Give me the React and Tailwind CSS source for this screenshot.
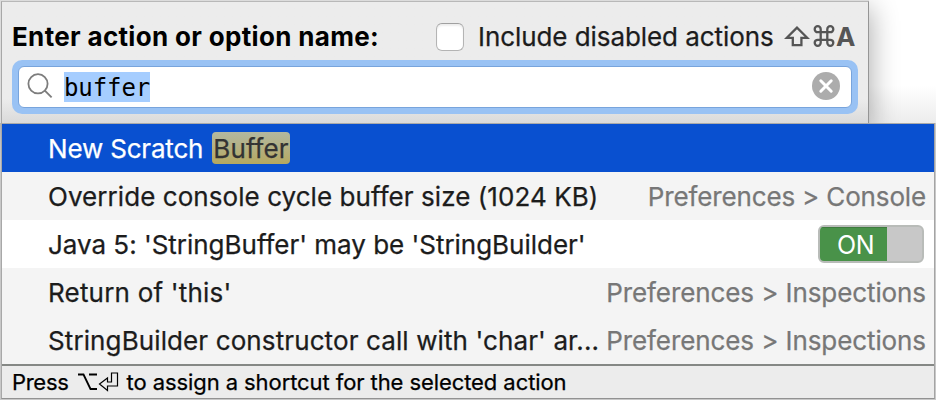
const ROW = "flex h-12 shrink-0 items-center justify-between pl-[46px] pr-[8px] text-[26px] leading-[46px] whitespace-nowrap pt-[2px] [-webkit-text-stroke:0.25px]";

function Toggle() {
  return (
    <div className="mt-[-2px] mr-[2px] flex h-[38px] w-[106px] overflow-hidden rounded-[6px] border-2 border-[#b9bcb9] bg-[#c8c8c8]">
      <div className="flex w-[67px] items-center justify-center pl-[4px] pt-[2px] bg-[#499249] text-[25px] leading-none tracking-[-0.5px] text-white shadow-[inset_0_1px_0_#3f7c3f] [-webkit-text-stroke:0px]">ON</div>
    </div>
  );
}

export default function App() {
  return (
    <div className="flex h-[400px] w-[936px] flex-col overflow-hidden bg-[#c8c8c8] font-['Inter','Liberation_Sans',sans-serif] text-[#1c1c1c]">
      <div className="flex h-[123px] shrink-0 bg-gradient-to-b from-white via-white via-70% to-[#ececec]">
        <div className="flex w-[869px] shrink-0 border-l border-t border-[#dcdcdc] shadow-[2px_8px_26px_rgba(0,0,0,0.32)]">
          <div className="flex w-[868px] shrink-0 flex-col border border-b-0 border-l-[#a8a8a8] border-r-[#959595] border-t-[#b8b8b8] bg-gradient-to-b from-[#ececec] from-80% to-[#dadada] px-[10px]">
            <div className="flex h-[58px] shrink-0 items-center whitespace-nowrap pt-[10px]">
              <span className="w-[424px] text-[26px] font-bold tracking-[0.33px] text-black">Enter action or option name:</span>
              <span className="mt-[2px] h-7 w-7 shrink-0 rounded-[6px] border border-[#b4b4b4] border-t-[#a0a0a0] bg-white shadow-[inset_0_2px_2px_#eee]" />
              <span className="ml-[14px] w-[306px] text-[26px] tracking-[-0.07px] [-webkit-text-stroke:0.25px]">Include disabled actions</span>
              <svg className="h-[22px] w-[52px] shrink-0" viewBox="0 0 52 22" fill="none" stroke="#555" strokeWidth="2.3">
                <path d="M13 2.6 2.8 12.8H8.8v7.4h8.6v-7.4h5.8Z" />
                <path d="M36.7 7.2h6.6v7.6h-6.6zM36.7 7.2h-3a3 3 0 1 1 3-3zM43.3 7.2v-3a3 3 0 1 1 3 3zM43.3 14.8h3a3 3 0 1 1-3 3zM36.7 14.8v3a3 3 0 1 1-3-3z" />
              </svg>
              <span className="text-[26px] font-bold text-[#555]">A</span>
            </div>
            <div className="flex h-[54px] w-[846px] shrink-0 rounded-[10px] bg-[#99c2f4] p-[6px]">
              <div className="flex flex-1 items-center rounded-[6px] border border-[#78a4dc] bg-white pl-[8px] pr-[11px]">
                <svg className="-mt-[2px] h-[26px] w-[26px]" viewBox="0 0 26 26" fill="none" stroke="#7d7d7d" strokeWidth="1.8">
                  <circle cx="11" cy="10.8" r="9.6" />
                  <path d="m17.6 17.4 7 7" />
                </svg>
                <span className="-mt-px ml-[11px] h-[30px] bg-[#a5cdff] font-['DejaVu_Sans_Mono',monospace] text-[24px] leading-[32px] tracking-[-0.1px] text-black">buffer</span>
                <svg className="-mt-[2px] ml-auto h-7 w-7" viewBox="0 0 28 28">
                  <circle cx="14" cy="14" r="14" fill="#acacac" />
                  <path d="m8.8 8.8 10.4 10.4M19.2 8.8 8.8 19.2" stroke="#fff" strokeWidth="3" strokeLinecap="round" />
                </svg>
              </div>
            </div>
          </div>
        </div>
      </div>
      <div className="ml-px flex h-[276px] w-[934px] shrink-0 flex-col border border-b-[#929292] border-l-[#a8a8a8] border-r-[#a4a4a4] border-t-[#aaa] bg-[#f4f4f4]">
        <div className={ROW + " bg-[#0950d0] text-white"}>
          <span className="flex items-center tracking-[-0.18px]">
            New Scratch
            <span className="-mt-[2px] ml-[9px] h-8 w-[78px] rounded-[4px] bg-gradient-to-b from-[#b3b8a0] to-[#b5a85f] pl-px leading-[34px] tracking-[0.1px] text-[#333]">Buffer</span>
          </span>
        </div>
        <div className={ROW}>
          <span className="tracking-[0.06px]">Override console cycle buffer size (1024 KB)</span>
          <span className="tracking-[-0.15px] text-[#777]">Preferences &gt; Console</span>
        </div>
        <div className={ROW + " bg-white"}>
          <span className="tracking-[-0.02px]">Java 5: 'StringBuffer' may be 'StringBuilder'</span>
          <Toggle />
        </div>
        <div className={ROW}>
          <span className="tracking-[0.2px]">Return of 'this'</span>
          <span className="tracking-[-0.09px] text-[#777]">Preferences &gt; Inspections</span>
        </div>
        <div className={ROW}>
          <span className="tracking-[0.11px]">StringBuilder constructor call with 'char' ar...</span>
          <span className="tracking-[-0.09px] text-[#777]">Preferences &gt; Inspections</span>
        </div>
        <div className="flex h-[34px] shrink-0 items-center border-t-2 border-[#858885] bg-[#ececec] pl-[10px] text-[22px] tracking-[-0.3px] whitespace-nowrap text-black [-webkit-text-stroke:0.25px]">
          <span>Press</span>
          <svg className="ml-[8px] h-[20px] w-[42px]" viewBox="0 0 42 20" fill="none" stroke="#000">
            <path d="M1 2.5h5.5l7 14.5H20M12 2.5h8" strokeWidth="1.8" />
            <path d="M34.5 1h6v13h-10v4.5l-8-6.5 8-6v4h4z" strokeWidth="1.2" />
          </svg>
          <span className="ml-[8px] tracking-[-0.08px]">to assign a shortcut for the selected action</span>
        </div>
      </div>
    </div>
  );
}
